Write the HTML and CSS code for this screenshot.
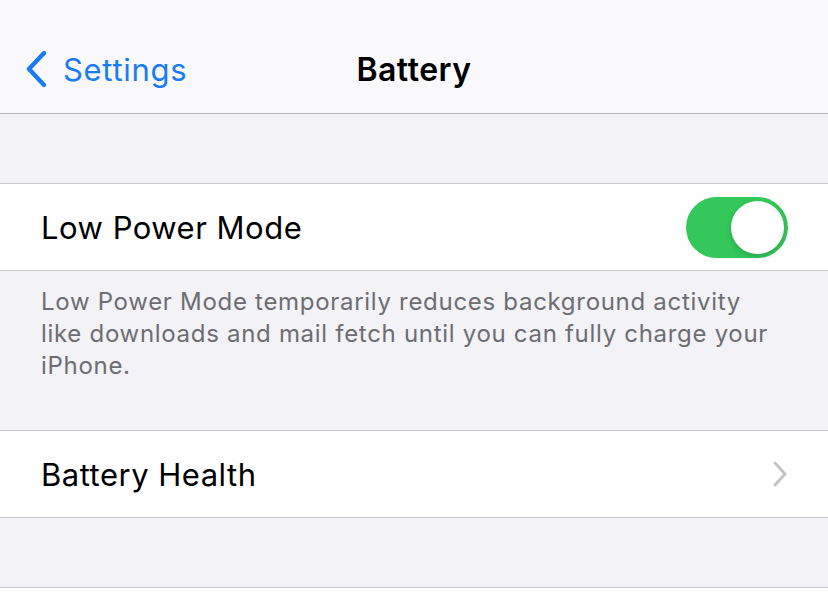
FILE: index.html
```html
<!DOCTYPE html>
<html lang="en">
<head>
    <meta charset="UTF-8">
    <meta name="viewport" content="width=device-width, initial-scale=1.0">
    <title>Battery</title>
    <link rel="stylesheet" href="styles.css">
</head>
<body>
    <header class="navbar">
        <a class="back" href="#">
            <svg class="back-icon" width="24" height="38" viewBox="0 0 24 38">
                <path d="M20 3 L5 19 L20 35" fill="none" stroke="#1a7cf5" stroke-width="4.4" stroke-linecap="round" stroke-linejoin="round"/>
            </svg>
            <span>Settings</span>
        </a>
        <h1 class="title">Battery</h1>
    </header>

    <div class="spacer"></div>

    <section class="group">
        <div class="row">
            <span class="label">Low Power Mode</span>
            <div class="switch on"><div class="knob"></div></div>
        </div>
    </section>
    <p class="footer">Low Power Mode temporarily reduces background activity like downloads and mail fetch until you can fully charge your iPhone.</p>

    <section class="group">
        <div class="row">
            <span class="label">Battery Health</span>
            <svg class="chevron" width="16" height="26" viewBox="0 0 16 26">
                <path d="M3 2 L13 13 L3 24" fill="none" stroke="#c4c4c7" stroke-width="3" stroke-linecap="round" stroke-linejoin="round"/>
            </svg>
        </div>
    </section>

    <div class="spacer"></div>

    <section class="group open"></section>
</body>
</html>
```

FILE: styles.css
```css
body {
    margin: 0;
    background: #f2f2f7;
    font-family: Inter, "Noto Sans", sans-serif;
    color: #000;
    -webkit-font-smoothing: antialiased;
}

.navbar {
    background: #f9f9fb;
    border-bottom: 1px solid #b4b4b8;
    display: flex;
    align-items: center;
    justify-content: center;
    position: relative;
    padding-top: 26px;
    height: 87px;
}

.back {
    position: absolute;
    left: 24px;
    top: 50px;
    display: flex;
    align-items: center;
    gap: 15px;
    color: #1a7cf5;
    text-decoration: none;
    font-size: 31px;
    letter-spacing: 0.7px;
}

.back-icon {
    display: block;
}

.title {
    margin: 0;
    font-size: 32px;
    font-weight: 600;
    letter-spacing: 0.5px;
}

.spacer {
    height: 69px;
}

.group {
    background: #fff;
    border-top: 1px solid #c8c8cc;
    border-bottom: 1px solid #c8c8cc;
}

/* next group starts just below the fold */
.group.open {
    height: 40px;
    border-bottom: none;
}

.row {
    height: 86px;
    display: flex;
    align-items: center;
    justify-content: space-between;
    padding: 0 40px 0 41px;
}

.label {
    font-size: 31px;
    letter-spacing: 0.5px;
}

.switch {
    width: 102px;
    height: 61px;
    border-radius: 31px;
    background: #34c759;
    position: relative;
}

.knob {
    position: absolute;
    top: 4px;
    right: 4px;
    width: 53px;
    height: 53px;
    border-radius: 50%;
    background: #fff;
    box-shadow: 0 3px 6px rgba(0, 0, 0, 0.15);
}

.chevron {
    display: block;
}

.footer {
    margin: 0;
    padding: 15px 50px 48px 41px;
    font-size: 24px;
    line-height: 32px;
    color: #6d6d72;
    letter-spacing: 0.7px;
}
```
